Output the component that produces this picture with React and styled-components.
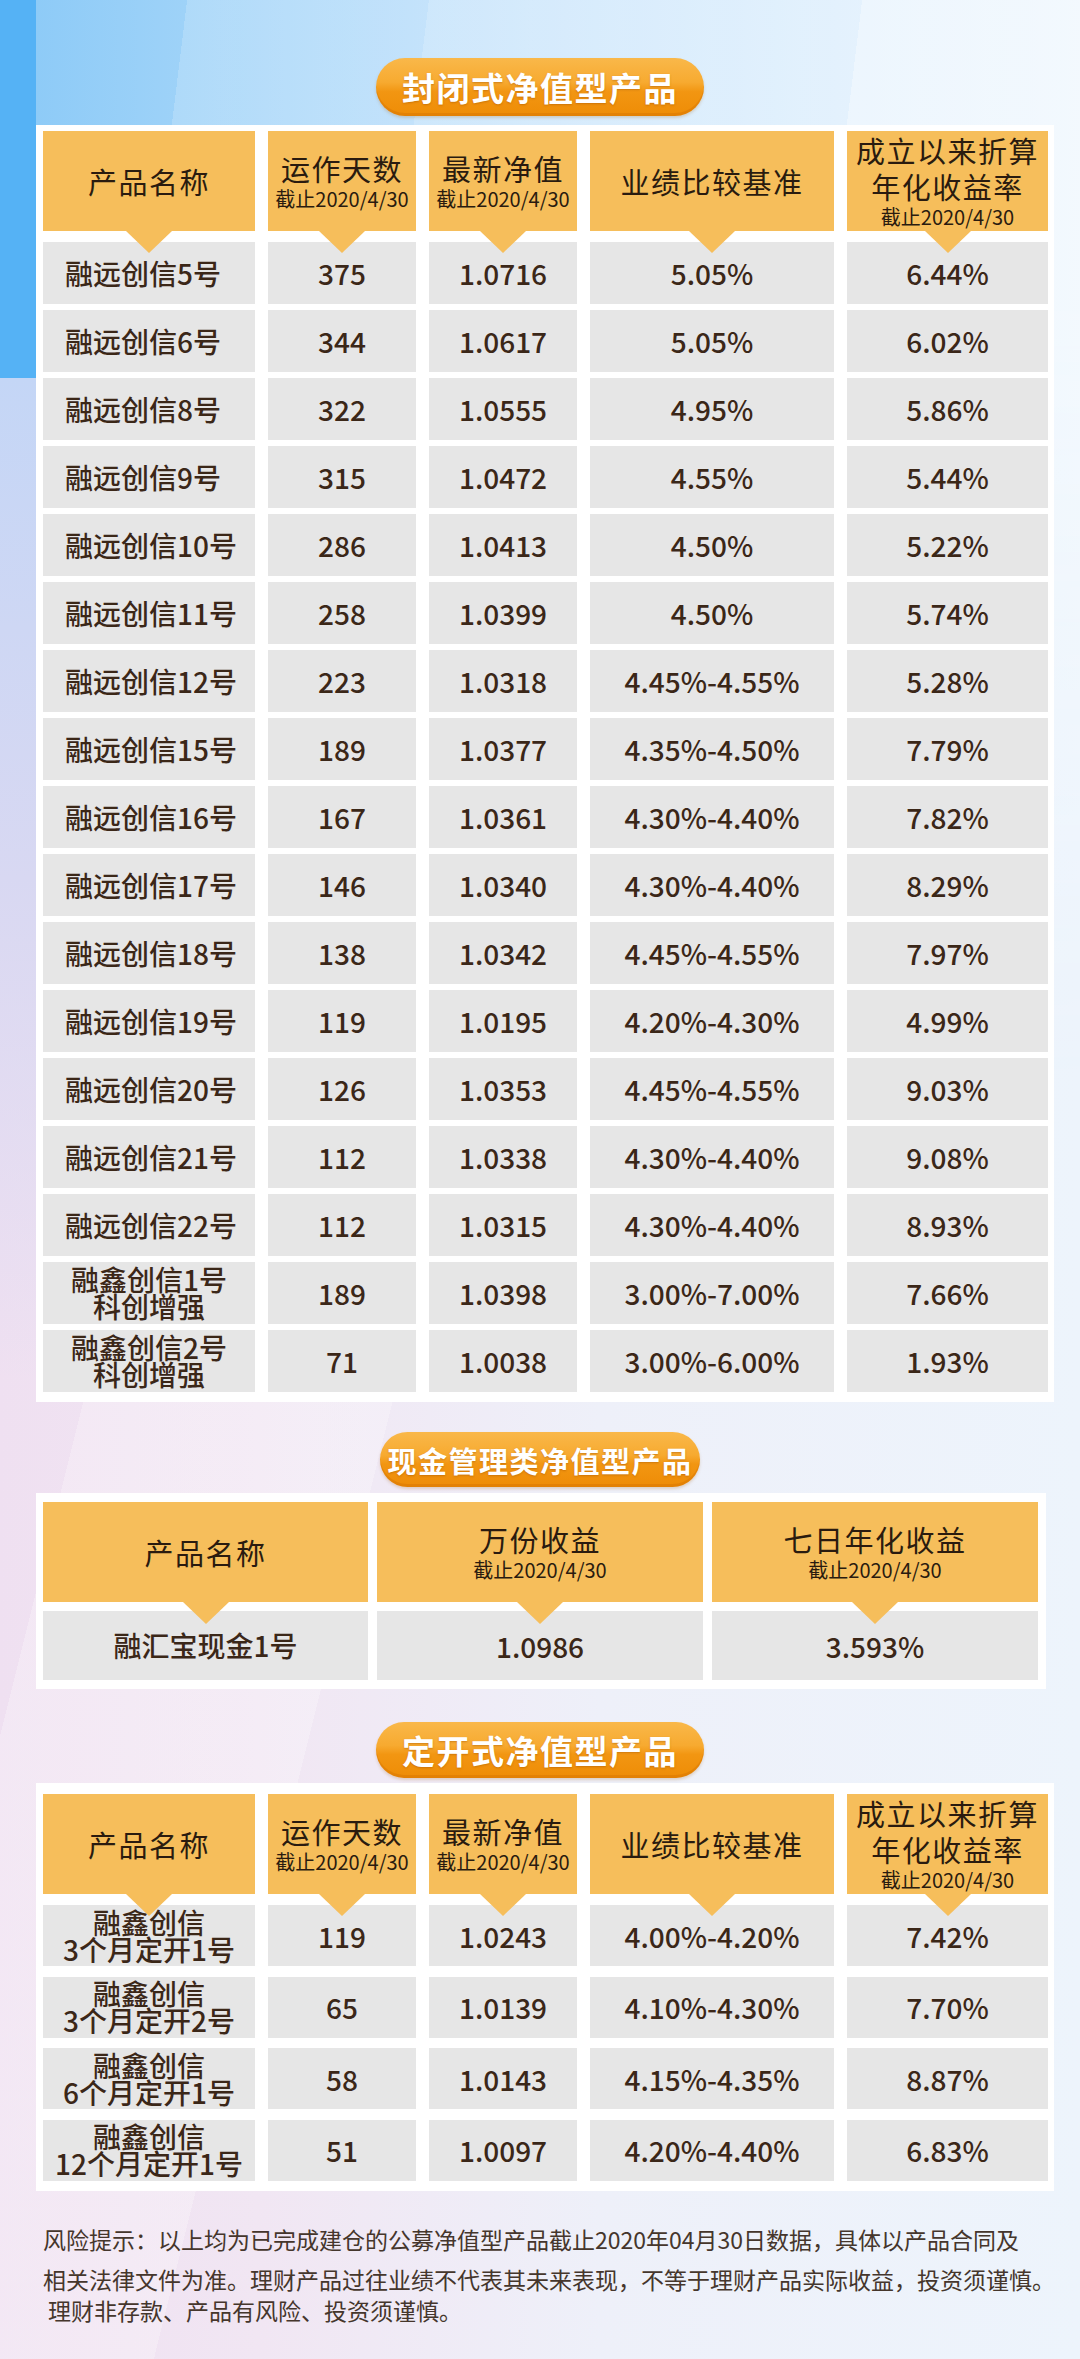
import React from 'react';
import styled, { createGlobalStyle } from 'styled-components';

const GlobalStyle = createGlobalStyle`
  body {
    margin: 0;
    font-family: "Noto Sans CJK SC", "Noto Sans", sans-serif;
  }
`;

const SUB = '截止2020/4/30';

const navHead = [
  { title: ['产品名称'] },
  { title: ['运作天数'], sub: SUB },
  { title: ['最新净值'], sub: SUB },
  { title: ['业绩比较基准'] },
  { title: ['成立以来折算', '年化收益率'], sub: SUB },
];

const closedRows = [
  [['融远创信5号'], '375', '1.0716', '5.05%', '6.44%'],
  [['融远创信6号'], '344', '1.0617', '5.05%', '6.02%'],
  [['融远创信8号'], '322', '1.0555', '4.95%', '5.86%'],
  [['融远创信9号'], '315', '1.0472', '4.55%', '5.44%'],
  [['融远创信10号'], '286', '1.0413', '4.50%', '5.22%'],
  [['融远创信11号'], '258', '1.0399', '4.50%', '5.74%'],
  [['融远创信12号'], '223', '1.0318', '4.45%-4.55%', '5.28%'],
  [['融远创信15号'], '189', '1.0377', '4.35%-4.50%', '7.79%'],
  [['融远创信16号'], '167', '1.0361', '4.30%-4.40%', '7.82%'],
  [['融远创信17号'], '146', '1.0340', '4.30%-4.40%', '8.29%'],
  [['融远创信18号'], '138', '1.0342', '4.45%-4.55%', '7.97%'],
  [['融远创信19号'], '119', '1.0195', '4.20%-4.30%', '4.99%'],
  [['融远创信20号'], '126', '1.0353', '4.45%-4.55%', '9.03%'],
  [['融远创信21号'], '112', '1.0338', '4.30%-4.40%', '9.08%'],
  [['融远创信22号'], '112', '1.0315', '4.30%-4.40%', '8.93%'],
  [['融鑫创信1号', '科创增强'], '189', '1.0398', '3.00%-7.00%', '7.66%'],
  [['融鑫创信2号', '科创增强'], '71', '1.0038', '3.00%-6.00%', '1.93%'],
];

const cashHead = [
  { title: ['产品名称'] },
  { title: ['万份收益'], sub: SUB },
  { title: ['七日年化收益'], sub: SUB },
];

const cashRows = [[['融汇宝现金1号'], '1.0986', '3.593%']];

const openRows = [
  [['融鑫创信', '3个月定开1号'], '119', '1.0243', '4.00%-4.20%', '7.42%'],
  [['融鑫创信', '3个月定开2号'], '65', '1.0139', '4.10%-4.30%', '7.70%'],
  [['融鑫创信', '6个月定开1号'], '58', '1.0143', '4.15%-4.35%', '8.87%'],
  [['融鑫创信', '12个月定开1号'], '51', '1.0097', '4.20%-4.40%', '6.83%'],
];

const FIVE = '212px 148px 148px 244px 201px';
const THREE = '325px 326px 326px';

function Table({ head, rows, cols, width, pad, headGap, rowH, rowGap, leftName }) {
  return (
    <Card $w={width} $pad={pad}>
      <Row $cols={cols}>
        {head.map((h, i) => (
          <HeadCell key={i}>
            <HeadTitle>
              {h.title.map((t, k) => (
                <React.Fragment key={t}>
                  {k > 0 && <br />}
                  {t}
                </React.Fragment>
              ))}
            </HeadTitle>
            {h.sub && <HeadSub>{h.sub}</HeadSub>}
          </HeadCell>
        ))}
      </Row>
      <Body $gap={rowGap} $top={headGap}>
        {rows.map((r, i) => (
          <Row key={i} $cols={cols}>
            <NameCell $h={rowH} $left={leftName && r[0].length === 1}>
              <NameText>
                {r[0].map((n, k) => (
                  <React.Fragment key={n}>
                    {k > 0 && <br />}
                    {n}
                  </React.Fragment>
                ))}
              </NameText>
            </NameCell>
            {r.slice(1).map((v, j) => (
              <Cell key={j} $h={rowH}>{v}</Cell>
            ))}
          </Row>
        ))}
      </Body>
    </Card>
  );
}

export default function App() {
  return (
    <Page>
      <GlobalStyle />
      <Content>
        <Pill $w={328} $h={58} $fs={33}>封闭式净值型产品</Pill>
        <Spacer $h={9} />
        <Table
          head={navHead}
          rows={closedRows}
          cols={FIVE}
          width={1018}
          pad="6px 6px 10px 7px"
          headGap={11}
          rowH={62}
          rowGap={6}
          leftName
        />

        <Spacer $h={30} />
        <Pill $w={320} $h={55} $fs={29}>现金管理类净值型产品</Pill>
        <Spacer $h={6} />
        <Table
          head={cashHead}
          rows={cashRows}
          cols={THREE}
          width={1010}
          pad="9px 8px 9px 7px"
          headGap={9}
          rowH={69}
          rowGap={9}
        />

        <Spacer $h={33} />
        <Pill $w={328} $h={56} $fs={33}>定开式净值型产品</Pill>
        <Spacer $h={5} />
        <Table
          head={navHead}
          rows={openRows}
          cols={FIVE}
          width={1018}
          pad="11px 6px 10px 7px"
          headGap={11}
          rowH={61}
          rowGap={10.5}
        />

        <Footer>
          <FootPara>
            风险提示：以上均为已完成建仓的公募净值型产品截止2020年04月30日数据，具体以产品合同及
            <br />
            相关法律文件为准。理财产品过往业绩不代表其未来表现，不等于理财产品实际收益，投资须谨慎。
          </FootPara>
          <FootLast>理财非存款、产品有风险、投资须谨慎。</FootLast>
        </Footer>
      </Content>
    </Page>
  );
}

const Page = styled.div`
  position: relative;
  width: 1080px;
  min-height: 2359px;
  overflow: hidden;
  box-sizing: border-box;
  padding-top: 58px;
  background:
    linear-gradient(#55b2f5, #55b2f5) 0 0 / 36px 378px no-repeat,
    linear-gradient(180deg, #c4d6f6 0, #d8d8f2 500px, rgba(236, 222, 242, 0) 1000px) 0 378px / 36px 1000px no-repeat,
    linear-gradient(104deg, transparent 0 420px, rgba(255, 255, 255, 0.25) 420px 720px, transparent 720px),
    linear-gradient(90deg, #efe0f1 0, #f1e6f3 260px, #eef0f9 600px, #edf4fc 1080px);

  &::before {
    content: '';
    position: absolute;
    left: 36px;
    top: 0;
    right: 0;
    height: 1100px;
    background:
      linear-gradient(97deg, transparent 0 150px, rgba(255, 255, 255, 0.18) 150px 390px, rgba(255, 255, 255, 0.32) 390px 820px, rgba(255, 255, 255, 0.55) 820px),
      linear-gradient(90deg, #8ecbf7 0, #a9d7f9 250px, #c2e1fb 500px, #d6ebfc 800px, #e4f1fd 1044px);
    -webkit-mask-image: linear-gradient(180deg, #000 0, #000 280px, transparent 1100px);
    mask-image: linear-gradient(180deg, #000 0, #000 280px, transparent 1100px);
    pointer-events: none;
  }
`;

const Content = styled.div`
  position: relative;
  z-index: 1;
  display: flex;
  flex-direction: column;
  align-items: center;
`;

const Spacer = styled.div`
  height: ${p => p.$h}px;
  flex-shrink: 0;
`;

const Pill = styled.div`
  width: ${p => p.$w}px;
  height: ${p => p.$h}px;
  border-radius: 999px;
  display: flex;
  align-items: center;
  justify-content: center;
  background: linear-gradient(180deg, #f9b84a 0%, #f7aa30 42%, #f29612 58%, #ee8c06 100%);
  box-shadow: inset 0 -3px 0 rgba(205, 110, 0, 0.35), 0 2px 3px rgba(170, 110, 40, 0.25);
  color: #fff;
  font-weight: 700;
  font-size: ${p => p.$fs}px;
  letter-spacing: 1.5px;
  text-shadow: 0 1px 2px rgba(160, 80, 0, 0.45);
`;

const Card = styled.div`
  align-self: flex-start;
  margin-left: 36px;
  width: ${p => p.$w}px;
  box-sizing: border-box;
  padding: ${p => p.$pad};
  background: #fff;
`;

const Row = styled.div`
  display: grid;
  grid-template-columns: ${p => p.$cols};
  column-gap: ${p => (p.$cols === THREE ? 9 : 13)}px;
`;

const Body = styled.div`
  display: flex;
  flex-direction: column;
  gap: ${p => p.$gap}px;
  margin-top: ${p => p.$top}px;
`;

const HeadCell = styled.div`
  position: relative;
  height: 100px;
  background: #f6be5b;
  display: flex;
  flex-direction: column;
  align-items: center;
  justify-content: center;
  color: #2a1b0f;

  &::after {
    content: '';
    position: absolute;
    left: 50%;
    bottom: -22px;
    transform: translateX(-50%);
    border-left: 23px solid transparent;
    border-right: 23px solid transparent;
    border-top: 22px solid #f6be5b;
    z-index: 2;
  }
`;

const HeadTitle = styled.div`
  font-size: 29px;
  line-height: 36px;
  letter-spacing: 1.5px;
  text-align: center;
  white-space: nowrap;
`;

const HeadSub = styled.div`
  font-size: 20px;
  line-height: 26px;
  white-space: nowrap;
`;

const Cell = styled.div`
  height: ${p => p.$h}px;
  background: #e6e6e6;
  display: flex;
  align-items: center;
  justify-content: center;
  font-size: 28px;
  font-weight: 500;
  color: #3b2718;
  white-space: nowrap;
`;

const NameCell = styled(Cell)`
  justify-content: ${p => (p.$left ? 'flex-start' : 'center')};
  padding-left: ${p => (p.$left ? 22 : 0)}px;
`;

const NameText = styled.div`
  line-height: 27px;
  text-align: center;
`;

const Footer = styled.div`
  align-self: flex-start;
  padding: 28px 0 0 43px;
  color: #45362c;
  font-size: 23px;
  white-space: nowrap;
`;

const FootPara = styled.p`
  margin: 0;
  line-height: 40px;
`;

const FootLast = styled.p`
  margin: -3px 0 0;
  padding-left: 5px;
  line-height: 28px;
`;
